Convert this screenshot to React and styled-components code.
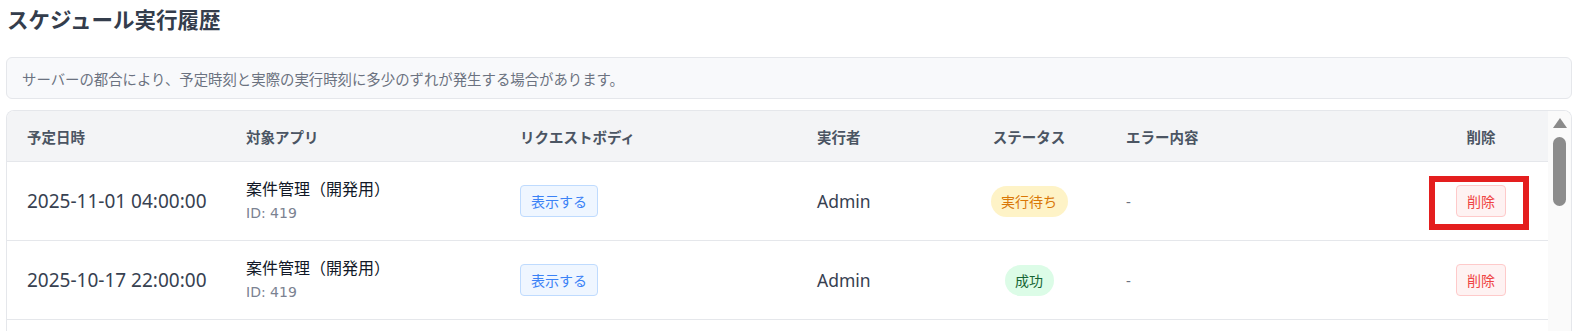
import styled, { createGlobalStyle } from "styled-components"

const GlobalStyle = createGlobalStyle`
  html, body {
    margin: 0;
    padding: 0;
    background: #ffffff;
    overflow: hidden;
  }
  body {
    font-family: "Noto Sans", "Noto Sans CJK JP", sans-serif;
    color: #374151;
  }
`

const COLUMNS = '219px 274px 297px 155px 154px 308px 1fr'

const HISTORY = [
  { id: 1, date: '2025-11-01 04:00:00', app: '案件管理（開発用）', appId: 419, user: 'Admin', status: 'pending', error: '-', highlight: true },
  { id: 2, date: '2025-10-17 22:00:00', app: '案件管理（開発用）', appId: 419, user: 'Admin', status: 'success', error: '-' },
]

const STATUS_LABELS = {
  pending: '実行待ち',
  success: '成功',
}

const App = () => {
  return (
    <Page>
      <GlobalStyle />
      <Title>スケジュール実行履歴</Title>
      <Notice>サーバーの都合により、予定時刻と実際の実行時刻に多少のずれが発生する場合があります。</Notice>
      <TableFrame>
        <TableBody>
          <HeadRow>
            <HeadCell>予定日時</HeadCell>
            <HeadCell>対象アプリ</HeadCell>
            <HeadCell>リクエストボディ</HeadCell>
            <HeadCell>実行者</HeadCell>
            <HeadCell $center>ステータス</HeadCell>
            <HeadCell>エラー内容</HeadCell>
            <HeadCell $center>削除</HeadCell>
          </HeadRow>
          {HISTORY.map(item => (
            <Row key={item.id}>
              <DateCell>{item.date}</DateCell>
              <Cell>
                <AppBlock>
                  <AppName>{item.app}</AppName>
                  <AppId>ID: {item.appId}</AppId>
                </AppBlock>
              </Cell>
              <Cell>
                <ShowButton>表示する</ShowButton>
              </Cell>
              <UserCell>{item.user}</UserCell>
              <Cell $center>
                <StatusBadge $status={item.status}>{STATUS_LABELS[item.status]}</StatusBadge>
              </Cell>
              <ErrorCell>{item.error}</ErrorCell>
              <Cell $center>
                <DeleteButton>削除</DeleteButton>
                {item.highlight && <Highlight />}
              </Cell>
            </Row>
          ))}
        </TableBody>
        <ScrollRail>
          <ScrollArrow>
            <svg width="14" height="10" viewBox="0 0 14 10">
              <path d="M7 0 L14 10 L0 10 Z" fill="#8a8a8a" />
            </svg>
          </ScrollArrow>
          <ScrollThumb />
        </ScrollRail>
      </TableFrame>
    </Page>
  )
}

const Page = styled.div`
  padding: 4px 24px 0 6px;
`

const Title = styled.h1`
  margin: 0 0 21px 1px;
  font-size: 21.5px;
  line-height: 32px;
  font-weight: 700;
  color: #343d4c;
`

const Notice = styled.div`
  height: 40px;
  display: flex;
  align-items: center;
  padding: 0 15px;
  border: 1px solid #e5e7eb;
  border-radius: 6px;
  background: #f8f9fb;
  font-size: 14.4px;
  color: #6b7280;
  margin-bottom: 11px;
`

const TableFrame = styled.div`
  display: flex;
  border: 1px solid #e5e7eb;
  border-bottom: none;
  border-radius: 8px 8px 0 0;
  overflow: hidden;
  height: 230px;
`

const TableBody = styled.div`
  flex: 1;
  min-width: 0;
`

const HeadRow = styled.div`
  display: grid;
  grid-template-columns: ${COLUMNS};
  height: 50px;
  background: #f3f4f6;
  border-bottom: 1px solid #e5e7eb;
`

const HeadCell = styled.div`
  display: flex;
  align-items: center;
  justify-content: ${p => p.$center ? 'center' : 'flex-start'};
  padding: 0 20px;
  font-size: 14.5px;
  font-weight: 700;
  color: #4b5563;
`

const Row = styled.div`
  display: grid;
  grid-template-columns: ${COLUMNS};
  height: 78px;
  border-bottom: 1px solid #e5e7eb;
`

const Cell = styled.div`
  position: relative;
  display: flex;
  align-items: center;
  justify-content: ${p => p.$center ? 'center' : 'flex-start'};
  padding: 0 20px;
  white-space: nowrap;
`

const DateCell = styled(Cell)`
  padding-right: 0;
  font-size: 19px;
  color: #374151;
`

const UserCell = styled(Cell)`
  font-size: 17.5px;
  color: #374151;
`

const ErrorCell = styled(Cell)`
  font-size: 15px;
  color: #6b7280;
`

const AppBlock = styled.div`
  display: flex;
  flex-direction: column;
`

const AppName = styled.span`
  font-size: 16px;
  line-height: 24px;
  color: #111827;
`

const AppId = styled.span`
  font-family: "DejaVu Sans", "Noto Sans", sans-serif;
  font-size: 14px;
  line-height: 24px;
  color: #7b8291;
`

const ShowButton = styled.button`
  height: 32px;
  padding: 0 10px;
  border: 1px solid #bfdbfe;
  border-radius: 4px;
  background: #eff6ff;
  color: #3b82f6;
  font-family: inherit;
  font-size: 14px;
`

const StatusBadge = styled.span`
  display: inline-flex;
  align-items: center;
  height: 31px;
  padding: 0 10.5px;
  border-radius: 999px;
  font-size: 14px;
  background: ${p => p.$status === 'success' ? '#dcfce7' : '#fef3c7'};
  color: ${p => p.$status === 'success' ? '#166534' : '#d97706'};
`

const DeleteButton = styled.button`
  height: 32px;
  padding: 0 10px;
  border: 1px solid #fecaca;
  border-radius: 4px;
  background: #fef2f2;
  color: #ef4444;
  font-family: inherit;
  font-size: 14px;
`

const Highlight = styled.div`
  position: absolute;
  left: 15px;
  top: 14px;
  width: 88px;
  height: 42px;
  border: 6px solid #e41e1e;
  pointer-events: none;
`

const ScrollRail = styled.div`
  width: 23px;
  flex-shrink: 0;
  display: flex;
  flex-direction: column;
  align-items: center;
  background: #fafafa;
  padding-top: 7px;
`

const ScrollArrow = styled.div`
  display: flex;
  height: 10px;
  margin-bottom: 9px;
`

const ScrollThumb = styled.div`
  width: 13px;
  height: 69px;
  border-radius: 7px;
  background: #8c8c8c;
`

export default App
